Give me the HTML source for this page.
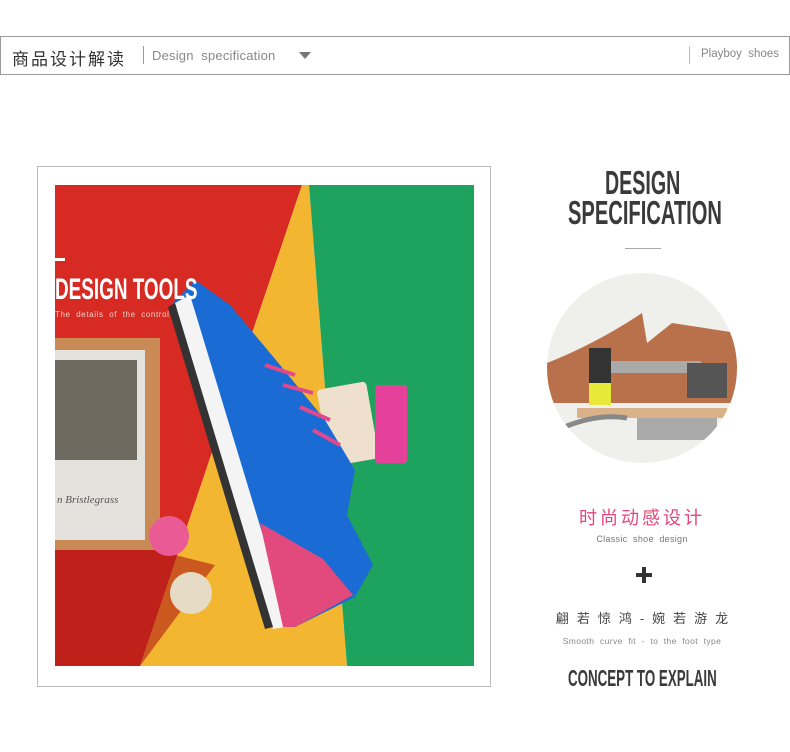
<!DOCTYPE html>
<html><head><meta charset="utf-8"><style>
*{margin:0;padding:0;box-sizing:border-box}
body{width:790px;height:752px;background:#fff;position:relative;overflow:hidden;font-family:"Liberation Sans","Noto Sans CJK SC",sans-serif}
.a{position:absolute;white-space:nowrap}
.cond{font-family:"Liberation Sans",sans-serif;font-weight:bold;transform-origin:left top;line-height:1}
</style></head><body>
<div class="a" style="left:0;top:36px;width:790px;height:39px;border:1px solid #9a9a9a"></div>
<div class="a" style="left:12px;top:45px;font-size:17px;color:#333;letter-spacing:2px">商品设计解读</div>
<div class="a" style="left:143px;top:46px;width:1px;height:18px;background:#999"></div>
<div class="a" style="left:152px;top:48px;font-size:13px;color:#888;letter-spacing:0.2px">Design&nbsp; specification</div>
<div class="a" style="left:299px;top:52px;width:0;height:0;border-left:6px solid transparent;border-right:6px solid transparent;border-top:7px solid #777"></div>
<div class="a" style="left:689px;top:46px;width:1px;height:18px;background:#bbb"></div>
<div class="a" style="left:701px;top:48px;font-size:11.5px;color:#888">Playboy&nbsp; shoes</div>

<div class="a" style="left:37px;top:166px;width:454px;height:521px;border:1px solid #bbb"></div>
<svg class="a" style="left:55px;top:185px" width="419" height="481" viewBox="0 0 419 481">
<polygon points="0,0 247,0 85,481 0,481" fill="#d62a23"/>
<polygon points="247,0 254,0 292,481 85,481" fill="#f2b630"/>
<polygon points="254,0 419,0 419,481 292,481" fill="#1ea35f"/>
<polygon points="0,340 160,380 85,481 0,481" fill="#b01a14" opacity="0.6"/>
<rect x="-10" y="153" width="115" height="212" fill="#c98a55"/>
<rect x="-10" y="165" width="100" height="190" fill="#e4e2dd"/>
<rect x="0" y="175" width="82" height="100" fill="#6f6a60"/>
<text x="2" y="318" font-family="Liberation Serif" font-style="italic" font-size="11" fill="#555">n Bristlegrass</text>
<circle cx="114" cy="351" r="20" fill="#ea5a94"/>
<circle cx="136" cy="408" r="21" fill="#e6dcc6"/>
<rect x="268" y="200" width="50" height="78" rx="4" fill="#eee0cc" transform="rotate(-10 293 239)"/>
<rect x="320" y="200" width="32" height="78" rx="3" fill="#e5409a"/>
<polygon points="118,118 140,95 175,120 225,180 270,235 300,285 292,330 318,380 300,412 240,442 218,442" fill="#1a6bd4"/>
<polygon points="120,118 135,110 232,430 230,442 218,444" fill="#f4f4f4"/>
<polygon points="113,122 120,118 218,442 210,444" fill="#333"/>
<polygon points="205,338 268,374 298,410 240,442 228,442" fill="#e24a7d"/>
<path d="M210 180 L240 190 M228 200 L258 208 M245 222 L275 235 M258 245 L285 260" stroke="#e04a8c" stroke-width="4"/>
</svg>
<div class="a" style="left:55px;top:258px;width:10px;height:3px;background:#fff"></div>
<div class="a cond" style="left:55px;top:275px;font-size:30px;color:#fff;transform:scaleX(0.63)">DESIGN TOOLS</div>
<div class="a" style="left:55px;top:310px;font-size:8px;color:#f2d0c8;letter-spacing:0.6px">The&nbsp; details&nbsp; of&nbsp; the&nbsp; control</div>

<div class="a cond" style="left:605px;top:166px;font-size:33px;color:#3a3a3a;transform:scaleX(0.595)">DESIGN</div>
<div class="a cond" style="left:568px;top:196px;font-size:33px;color:#3a3a3a;transform:scaleX(0.61)">SPECIFICATION</div>
<div class="a" style="left:625px;top:248px;width:36px;height:1px;background:#aaa"></div>
<svg class="a" style="left:547px;top:273px" width="190" height="190" viewBox="0 0 190 190">
<defs><clipPath id="c"><circle cx="95" cy="95" r="95"/></clipPath></defs>
<g clip-path="url(#c)">
<rect width="190" height="190" fill="#eff0ec"/>
<path d="M0 90 Q50 70 95 40 L100 70 L125 50 L190 60 L190 130 L0 130 Z" fill="#b8714a"/>
<rect x="42" y="75" width="22" height="40" fill="#333"/>
<rect x="42" y="110" width="22" height="22" fill="#e8e83a"/>
<rect x="64" y="88" width="90" height="12" fill="#aaa"/>
<rect x="140" y="90" width="40" height="35" fill="#555"/>
<rect x="30" y="135" width="150" height="10" fill="#d9b28a"/>
<rect x="90" y="145" width="80" height="22" fill="#aaa"/>
<path d="M15 155 Q50 140 80 145" stroke="#888" stroke-width="5" fill="none"/>
</g></svg>
<div class="a" style="left:542px;width:200px;text-align:center;top:504px;font-size:18px;color:#e8457a;letter-spacing:3px">时尚动感设计</div>
<div class="a" style="left:542px;width:200px;text-align:center;top:534px;font-size:9px;color:#777;letter-spacing:0.3px">Classic&nbsp; shoe&nbsp; design</div>
<div class="a" style="left:636px;top:573px;width:16px;height:4px;background:#333"></div>
<div class="a" style="left:642px;top:567px;width:4px;height:16px;background:#333"></div>
<div class="a" style="left:542px;width:208px;text-align:center;top:608px;font-size:13px;color:#444;letter-spacing:8px">翩若惊鸿-婉若游龙</div>
<div class="a" style="left:542px;width:200px;text-align:center;top:636px;font-size:8.5px;color:#888;letter-spacing:0.4px">Smooth&nbsp; curve&nbsp; fit&nbsp; -&nbsp; to&nbsp; the&nbsp; foot&nbsp; type</div>
<div class="a cond" style="left:568px;top:667px;font-size:23px;color:#3a3a3a;transform:scaleX(0.58)">CONCEPT TO EXPLAIN</div>
</body></html>
